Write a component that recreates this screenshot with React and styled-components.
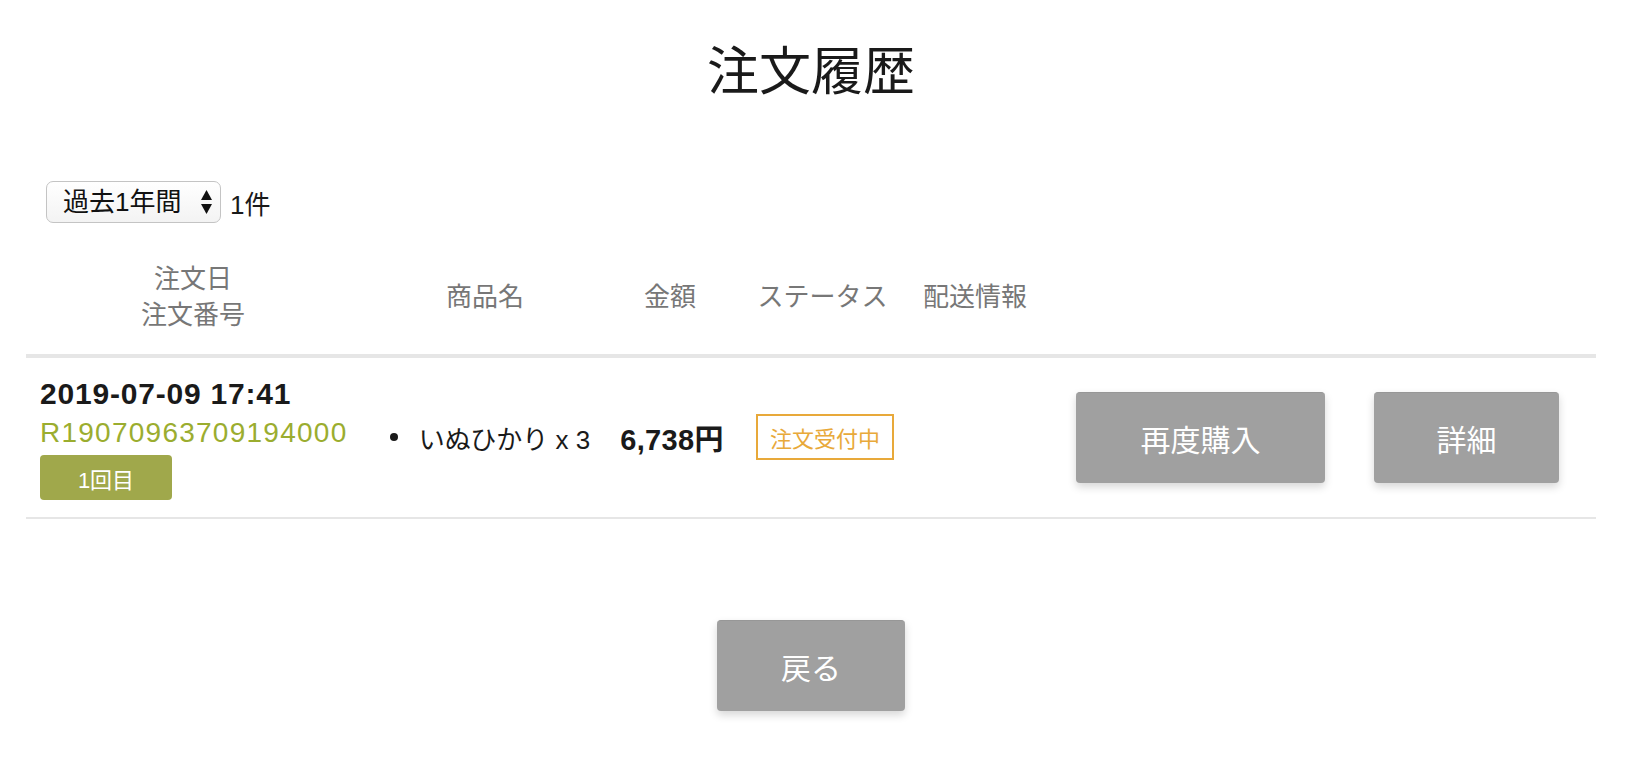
import React from "react";
import styled, { createGlobalStyle, css } from "styled-components";

const GlobalStyle = createGlobalStyle`
  html, body {
    margin: 0;
    padding: 0;
    background: #ffffff;
  }
  body {
    font-family: "Liberation Sans", "Noto Sans CJK JP", sans-serif;
    color: #1a1a1a;
  }
`;

const Page = styled.main`
  padding: 32px 34px 40px 26px;
`;

const Title = styled.h1`
  margin: 0;
  text-align: center;
  font-family: "Noto Sans CJK JP", sans-serif;
  font-size: 52px;
  line-height: 72px;
  font-weight: 400;
  color: #1a1a1a;
`;

const FilterBar = styled.div`
  margin-top: 77px;
  margin-left: 20px;
  display: flex;
  align-items: center;
  gap: 9px;
`;

const SelectBox = styled.label`
  box-sizing: border-box;
  display: inline-flex;
  align-items: center;
  width: 175px;
  height: 42px;
  padding: 0 7px 0 16px;
  border: 1px solid #c4c4c4;
  border-radius: 7px;
  background: linear-gradient(#ffffff, #f3f3f3);
  gap: 6px;
`;

const Select = styled.select`
  appearance: none;
  -webkit-appearance: none;
  border: none;
  background: transparent;
  padding: 0;
  margin: 0;
  flex: 1;
  font-family: "Liberation Sans", "Noto Sans CJK JP", sans-serif;
  font-size: 26px;
  color: #111;
  outline: none;
`;

const Count = styled.span`
  font-size: 26px;
  color: #1a1a1a;
`;

const columns = css`
  display: grid;
  grid-template-columns: 334px 250px 120px 185px 120px 1fr;
  align-items: center;
`;

const HeaderRow = styled.div`
  ${columns};
  padding: 38px 0 21px;
  border-bottom: 4px solid #e6e6e6;
`;

const HeaderCell = styled.div`
  text-align: center;
  color: #777777;
  font-size: 26px;
  line-height: 36px;
`;

const OrderRow = styled.div`
  ${columns};
  padding: 16px 0 17px;
  border-bottom: 2px solid #e6e6e6;
`;

const OrderInfo = styled.div`
  padding-left: 14px;
  display: flex;
  flex-direction: column;
  align-items: flex-start;
`;

const OrderDate = styled.div`
  font-size: 30px;
  line-height: 39px;
  font-weight: 700;
  letter-spacing: 0.8px;
  color: #1a1a1a;
`;

const OrderNumber = styled.div`
  font-size: 28px;
  line-height: 39px;
  letter-spacing: 1.25px;
  color: #9bad2f;
`;

const CountBadge = styled.span`
  margin-top: 3px;
  width: 132px;
  height: 45px;
  border-radius: 4px;
  background: #a0a84b;
  color: #ffffff;
  font-size: 22px;
  display: flex;
  align-items: center;
  justify-content: center;
`;

const ProductList = styled.ul`
  margin: 0;
  padding: 0 0 0 10px;
  list-style: none;
  display: flex;
  justify-content: center;
`;

const ProductItem = styled.li`
  display: flex;
  align-items: center;
  gap: 21px;
  font-size: 26px;
  color: #1a1a1a;
  &::before {
    content: "";
    width: 8px;
    height: 8px;
    border-radius: 50%;
    background: #1a1a1a;
  }
`;

const Price = styled.div`
  text-align: center;
  padding-left: 4px;
  font-size: 29px;
  font-weight: 700;
  letter-spacing: 0.3px;
  color: #1a1a1a;
`;

const StatusCell = styled.div`
  display: flex;
  justify-content: center;
  padding-left: 5px;
`;

const StatusTag = styled.span`
  box-sizing: border-box;
  width: 138px;
  height: 46px;
  border: 2px solid #e8a93a;
  color: #e8a93a;
  font-size: 22px;
  display: flex;
  align-items: center;
  justify-content: center;
`;

const Actions = styled.div`
  display: flex;
  padding-left: 41px;
  gap: 49px;
`;

const GrayButton = styled.button`
  box-sizing: border-box;
  width: ${(p) => p.$w}px;
  height: 91px;
  border: none;
  border-top: 1px solid #979797;
  border-radius: 4px;
  background: #a0a0a0;
  color: #ffffff;
  font-family: "Noto Sans CJK JP", sans-serif;
  font-size: 30px;
  box-shadow: 0 4px 9px rgba(0, 0, 0, 0.16);
  cursor: pointer;
`;

const Footer = styled.div`
  margin-top: 101px;
  display: flex;
  justify-content: center;
`;

const SortArrows = () => (
  <svg width="13" height="26" viewBox="0 0 13 26" aria-hidden="true">
    <path d="M6.5 1 L12 11 L1 11 Z" fill="#111" />
    <path d="M1 15 L12 15 L6.5 25 Z" fill="#111" />
  </svg>
);

export default function App() {
  return (
    <>
      <GlobalStyle />
      <Page>
        <Title>注文履歴</Title>
        <FilterBar>
          <SelectBox>
            <Select defaultValue="1y">
              <option value="1y">過去1年間</option>
              <option value="2y">過去2年間</option>
            </Select>
            <SortArrows />
          </SelectBox>
          <Count>1件</Count>
        </FilterBar>

        <HeaderRow>
          <HeaderCell>
            注文日
            <br />
            注文番号
          </HeaderCell>
          <HeaderCell>商品名</HeaderCell>
          <HeaderCell>金額</HeaderCell>
          <HeaderCell>ステータス</HeaderCell>
          <HeaderCell>配送情報</HeaderCell>
          <HeaderCell />
        </HeaderRow>

        <OrderRow>
          <OrderInfo>
            <OrderDate>2019-07-09 17:41</OrderDate>
            <OrderNumber>R19070963709194000</OrderNumber>
            <CountBadge>1回目</CountBadge>
          </OrderInfo>
          <ProductList>
            <ProductItem>いぬひかり x 3</ProductItem>
          </ProductList>
          <Price>6,738円</Price>
          <StatusCell>
            <StatusTag>注文受付中</StatusTag>
          </StatusCell>
          <div />
          <Actions>
            <GrayButton $w={249}>再度購入</GrayButton>
            <GrayButton $w={185}>詳細</GrayButton>
          </Actions>
        </OrderRow>

        <Footer>
          <GrayButton $w={188}>戻る</GrayButton>
        </Footer>
      </Page>
    </>
  );
}
